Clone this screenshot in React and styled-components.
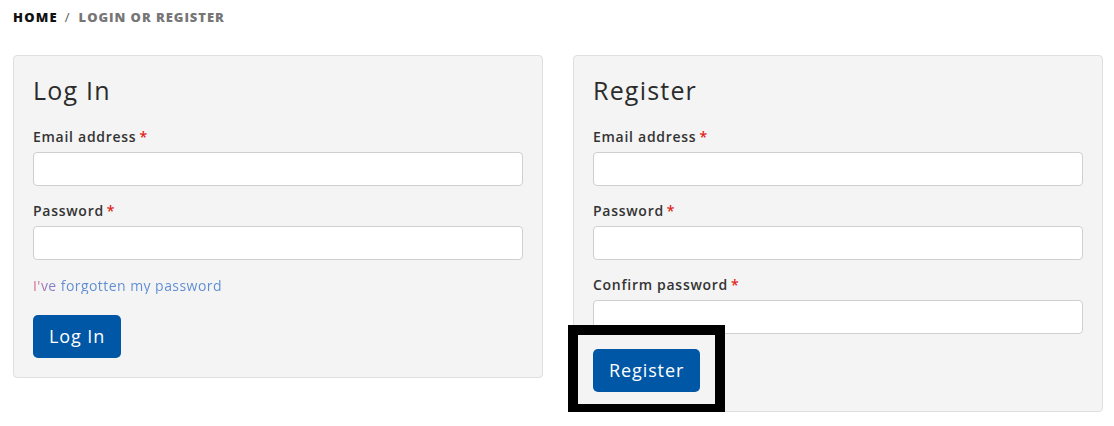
import React from "react";
import styled, { createGlobalStyle } from "styled-components";

const Global = createGlobalStyle`
  html, body { margin: 0; padding: 0; background: #fff; }
  body { font-family: "Open Sans", "Noto Sans", sans-serif; color: #333; }
  * { box-sizing: border-box; }
`;

const Page = styled.div`
  padding: 8px 11px 0 13px;
  width: 1114px;
`;

const Crumbs = styled.nav`
  display: flex;
  align-items: center;
  gap: 7px;
  font-size: 13px;
  font-weight: 800;
  text-transform: uppercase;
  height: 18px;
`;

const Crumb = styled.span`
  color: ${(p) => (p.$current ? "#767676" : "#111")};
  letter-spacing: ${(p) => (p.$current ? "0.95px" : "1.2px")};
`;

const Sep = styled.span`
  color: #555;
  font-weight: 400;
  margin-right: 2px;
`;

const Columns = styled.div`
  display: grid;
  grid-template-columns: 530px 530px;
  gap: 30px;
  align-items: start;
  margin-top: 29px;
`;

const Panel = styled.section`
  background: #f4f4f4;
  border: 1px solid #dfdfdf;
  border-radius: 4px;
  padding: 18px 19px 19px 19px;
`;

const Title = styled.h2`
  margin: 0 0 22px;
  font-size: 25px;
  font-weight: 400;
  letter-spacing: 1.2px;
  line-height: 32px;
  color: #2b2b2b;
`;

const Field = styled.div`
  display: flex;
  flex-direction: column;
  gap: 6px;
  margin-bottom: ${(p) => (p.$last ? "15px" : "16px")};
`;

const Label = styled.label`
  font-size: 14px;
  font-weight: 600;
  letter-spacing: 0.72px;
  line-height: 18px;
  color: #333;
`;

const Req = styled.span`
  color: #e0261b;
  margin-left: 3px;
`;

const Input = styled.input`
  display: block;
  height: 34px;
  width: 100%;
  border: 1px solid #cfcfcf;
  border-radius: 4px;
  background: #fff;
  font: inherit;
`;

const Forgot = styled.a`
  display: block;
  width: fit-content;
  font-size: 14px;
  line-height: 16px;
  letter-spacing: 0.45px;
  margin: 18px 0 21px;
  background: linear-gradient(90deg, #e1627c 0px, #8e7bc0 14px, #5f8dd1 34px, #5b8bd2 100%);
  -webkit-background-clip: text;
  background-clip: text;
  color: transparent;
  text-decoration: none;
  cursor: pointer;
`;

const Button = styled.button`
  display: block;
  height: 43px;
  padding: 0 16px;
  border: none;
  border-radius: 5px;
  background: #0057a6;
  color: #fff;
  font-family: inherit;
  font-size: 18px;
  letter-spacing: 0.9px;
  line-height: 43px;
  cursor: pointer;
`;

const ButtonWrap = styled.div`
  position: relative;
  width: fit-content;
`;

const Highlight = styled.div`
  position: absolute;
  left: -25px;
  top: -24px;
  width: 157px;
  height: 89px;
  border: 10px solid #000;
  pointer-events: none;
`;

export default function App() {
  return (
    <>
      <Global />
      <Page>
        <Crumbs>
          <Crumb>Home</Crumb>
          <Sep>/</Sep>
          <Crumb $current>Login or Register</Crumb>
        </Crumbs>
        <Columns>
          <Panel>
            <Title>Log In</Title>
            <Field>
              <Label>Email address<Req>*</Req></Label>
              <Input type="email" />
            </Field>
            <Field>
              <Label>Password<Req>*</Req></Label>
              <Input type="password" />
            </Field>
            <Forgot>I've forgotten my password</Forgot>
            <Button>Log In</Button>
          </Panel>
          <Panel>
            <Title>Register</Title>
            <Field>
              <Label>Email address<Req>*</Req></Label>
              <Input type="email" />
            </Field>
            <Field>
              <Label>Password<Req>*</Req></Label>
              <Input type="password" />
            </Field>
            <Field $last>
              <Label>Confirm password<Req>*</Req></Label>
              <Input type="password" />
            </Field>
            <ButtonWrap>
              <Button>Register</Button>
              <Highlight />
            </ButtonWrap>
          </Panel>
        </Columns>
      </Page>
    </>
  );
}
